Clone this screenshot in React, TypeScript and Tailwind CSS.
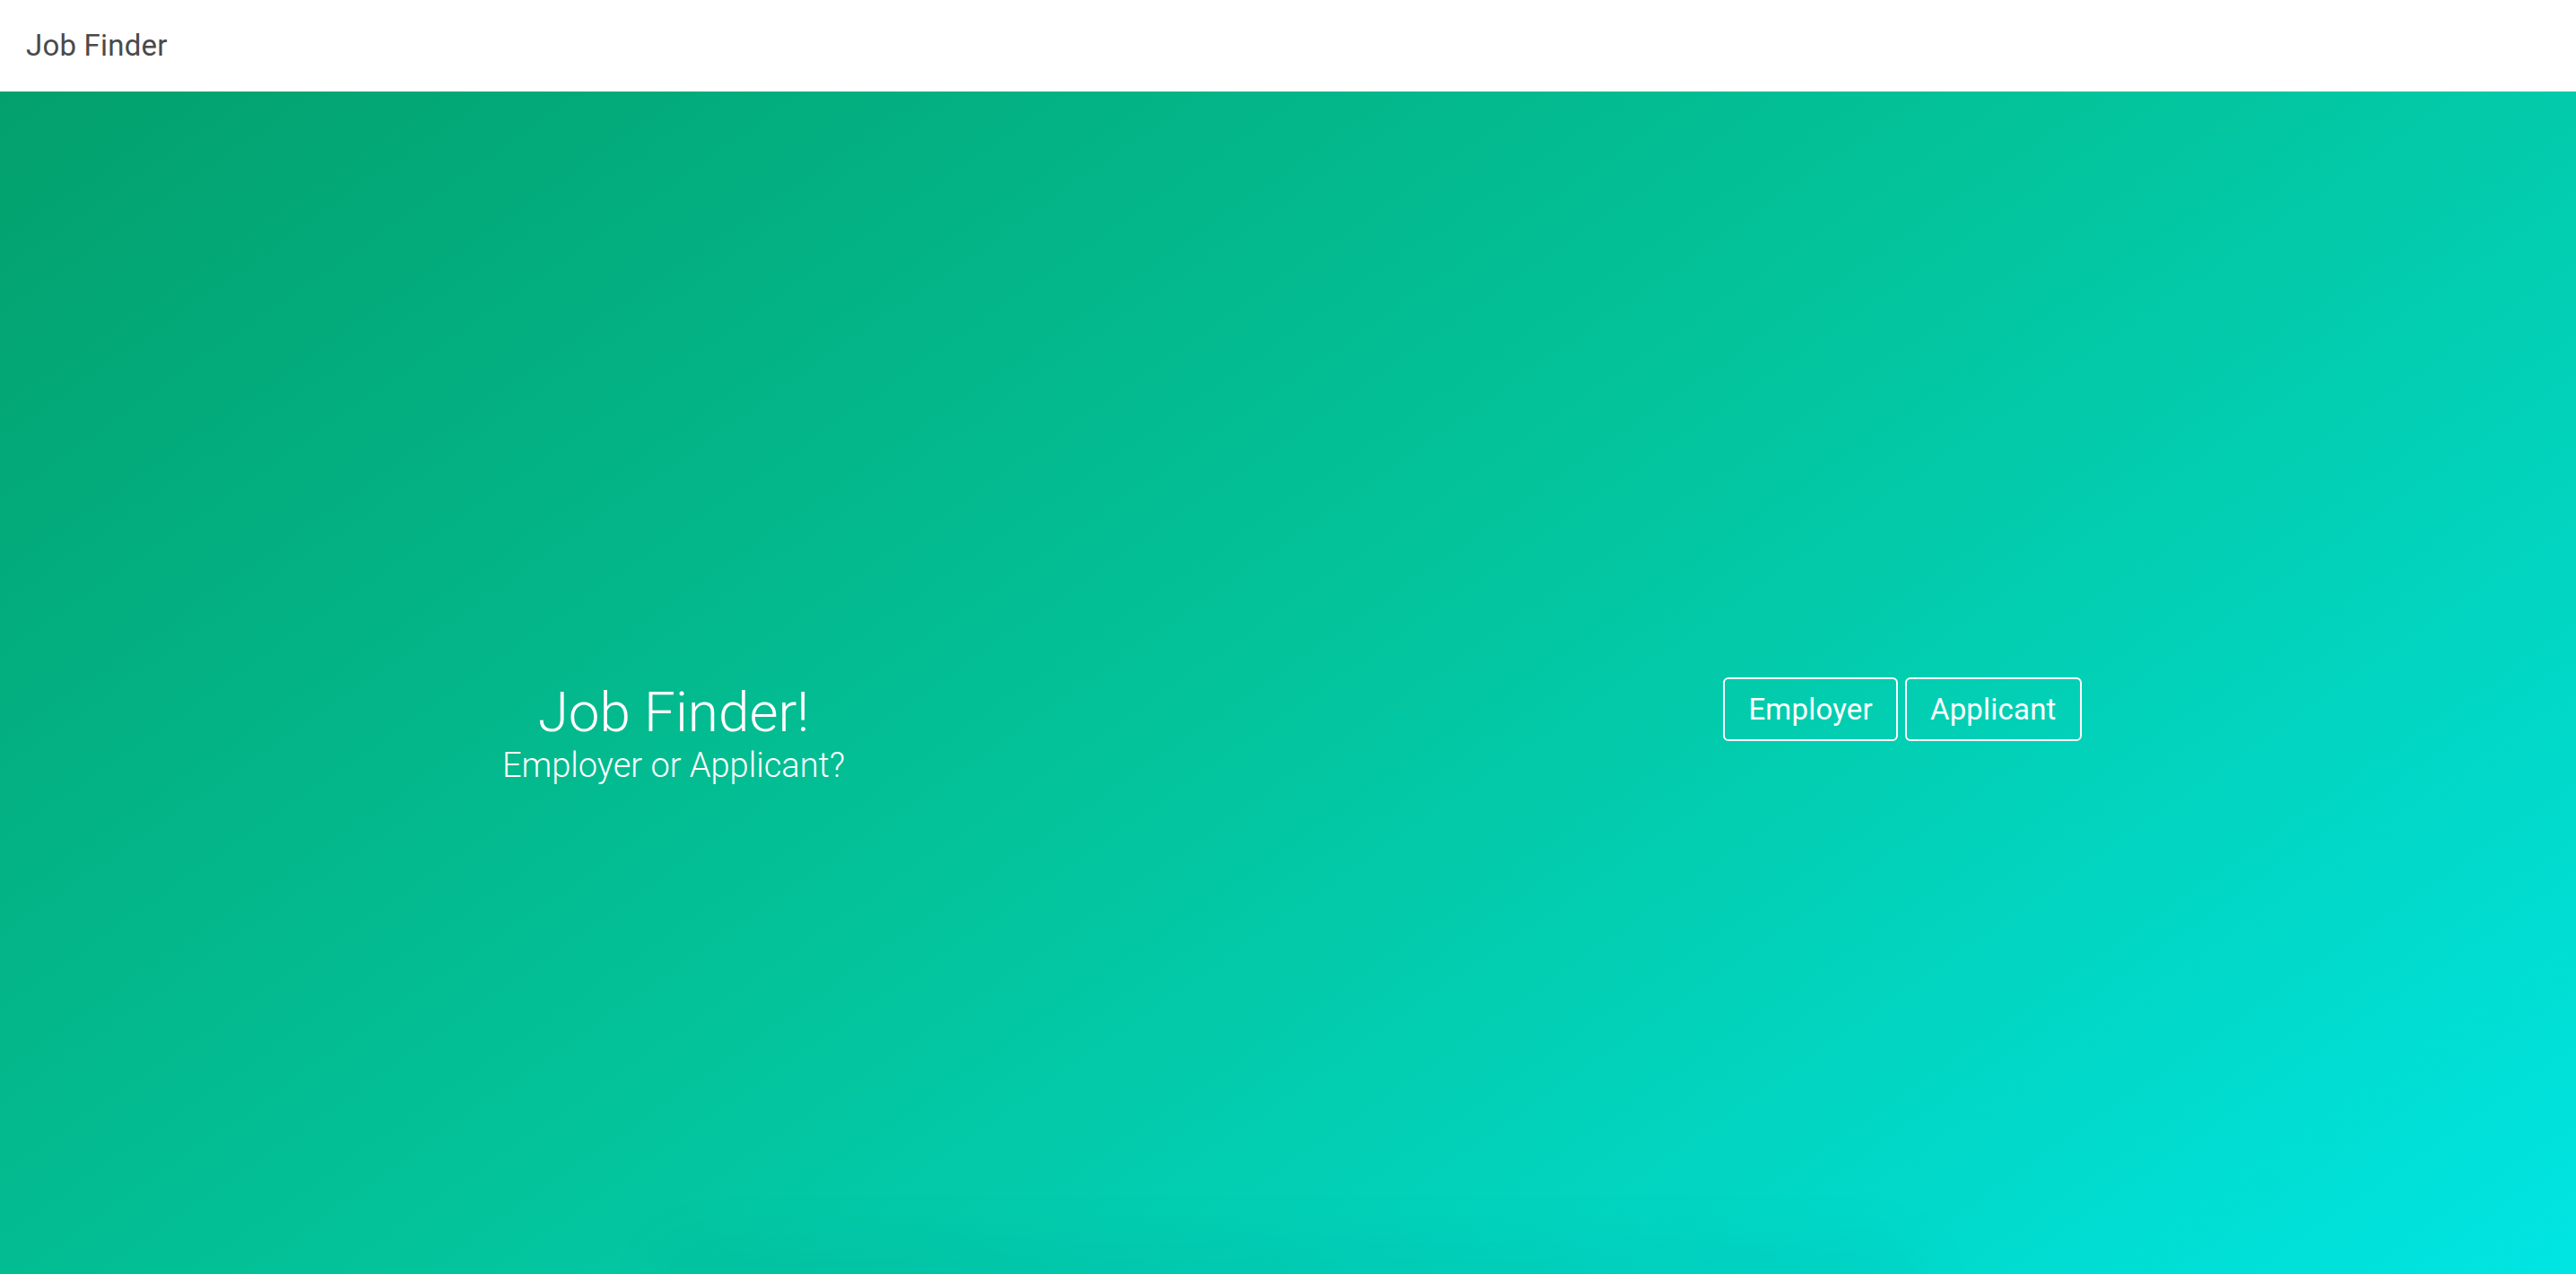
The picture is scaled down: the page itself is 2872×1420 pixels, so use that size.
import React from 'react';

// Landing page: header bar + gradient hero with the two role buttons
const roles = ['Employer', 'Applicant'];

const App = () => {
  return (
    <div className="min-h-screen flex flex-col font-['Roboto','Liberation_Sans',sans-serif]">
      <header className="h-[102px] bg-white flex items-center px-[29px] shrink-0">
        <span className="text-[33px] text-[#4a4a4a] tracking-[0.2px]">Job Finder</span>
      </header>

      <main className="relative flex-1 h-[1318px] flex items-center overflow-hidden bg-[linear-gradient(145deg,#03a06c_0%,#03c49c_50%,#00e5e3_100%)]">
        <div className="w-full px-[66px] grid grid-cols-2 items-start mt-[112px]">
          <div className="flex flex-col items-center text-white font-light mt-[5px]">
            <h1 className="text-[62px] leading-[1.1]">Job Finder!</h1>
            <p className="text-[38px] leading-[1.35]">Employer or Applicant?</p>
          </div>
          <div className="flex justify-center gap-[8px]">
            {roles.map((role) => (
              <button
                key={role}
                className="h-[71px] px-[26px] border-2 border-white rounded-[6px] text-white text-[33px] tracking-[0.2px] bg-transparent"
              >
                {role}
              </button>
            ))}
          </div>
        </div>
        {/* faint shadow bleeding in at the bottom edge */}
        <div className="absolute left-[740px] bottom-[-50px] w-[1400px] h-[70px] rounded-full bg-black/5 blur-2xl" />
      </main>
    </div>
  );
};

export default App;
